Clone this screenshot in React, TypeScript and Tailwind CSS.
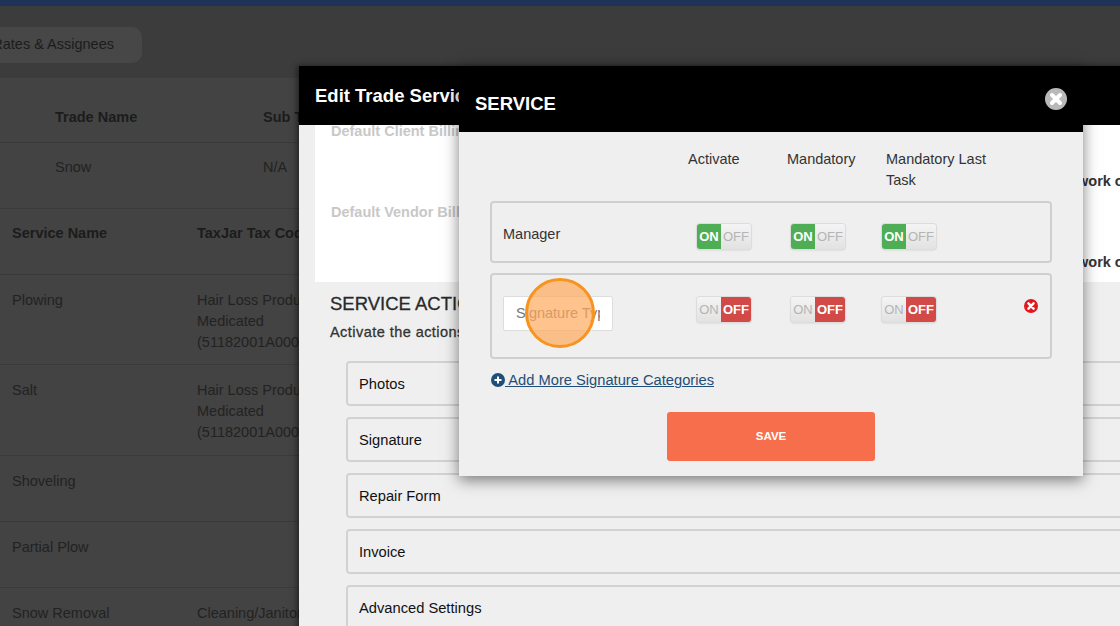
import React from "react";

const services = [
  { name: "Plowing", code: ["Hair Loss Products -", "Medicated", "(51182001A0000)"], h: "h-[90px]" },
  { name: "Salt", code: ["Hair Loss Products -", "Medicated", "(51182001A0000)"], h: "h-[91px]" },
  { name: "Shoveling", code: [], h: "h-[66px]" },
  { name: "Partial Plow", code: [], h: "h-[66px]" },
  { name: "Snow Removal", code: ["Cleaning/Janitorial"], h: "h-[66px]" },
];

const actions = ["Photos", "Signature", "Repair Form", "Invoice", "Advanced Settings"];

const Toggle = ({ on }: { on: boolean }) => (
  <div className="flex h-[25px] w-[54px] overflow-hidden rounded-[3px] text-[13px] leading-[25px] shadow-[0_0_0_1px_#dcdcdc,0_1px_2px_#c4c4c4]">
    <span
      className={
        on
          ? "w-[24px] shrink-0 bg-[#4fae55] text-center font-bold text-white"
          : "w-[24px] shrink-0 bg-gradient-to-b from-[#f4f4f4] to-[#e2e2e2] text-center text-[#b4b4b4]"
      }
    >
      ON
    </span>
    <span
      className={
        on
          ? "flex-1 bg-gradient-to-b from-[#f4f4f4] to-[#e2e2e2] text-center text-[#b4b4b4]"
          : "flex-1 bg-[#d24a47] text-center font-bold text-white"
      }
    >
      OFF
    </span>
  </div>
);

const CloseIcon = ({ size, bg, x }: { size: number; bg: string; x: string }) => (
  <svg width={size} height={size} viewBox="0 0 22 22">
    <circle cx="11" cy="11" r="11" fill={bg} />
    <path d="M7 7 L15 15 M15 7 L7 15" stroke={x} strokeWidth="4" strokeLinecap="round" />
  </svg>
);

export default function App() {
  return (
    <div className="relative h-[626px] w-[1120px] overflow-hidden bg-[#3c3c3c] font-['Liberation_Sans',sans-serif] text-[14.5px] text-[#222]">
      {/* dimmed page behind the modals */}
      <div className="h-[6px] bg-[#1f3358]" />
      <div className="h-[72px] pt-[21px]">
        <div className="flex h-[36px] w-[142px] items-center justify-end whitespace-nowrap rounded-r-[10px] bg-[#474747] pr-[28px] text-[#1c1c1c]">
          Rates &amp; Assignees
        </div>
      </div>
      <div className="bg-[#434343]">
        <div className="flex h-[65px] border-b border-[#3a3a3a] pl-[55px] pt-[30px] font-bold leading-[18px] text-[#1c1c1c]">
          <span className="w-[208px]">Trade Name</span>
          <span>Sub Trade</span>
        </div>
        <div className="flex h-[66px] border-b border-[#3a3a3a] pl-[55px] pt-[15px] leading-[18px]">
          <span className="w-[208px]">Snow</span>
          <span>N/A</span>
        </div>
        <div className="flex h-[66px] border-b border-[#3a3a3a] pl-[12px] pt-[15px] font-bold leading-[18px] text-[#1c1c1c]">
          <span className="w-[185px]">Service Name</span>
          <span>TaxJar Tax Code</span>
        </div>
        {services.map((s) => (
          <div key={s.name} className={`flex ${s.h} border-b border-[#3a3a3a] pl-[12px] pt-[15px] leading-[21px]`}>
            <span className="w-[185px]">{s.name}</span>
            <div>
              {s.code.map((line) => (
                <div key={line}>{line}</div>
              ))}
            </div>
          </div>
        ))}
      </div>

      {/* edit trade service panel */}
      <div className="absolute left-[299px] top-[66px] h-[600px] w-[900px] bg-[#efefef] shadow-[-2px_0_6px_rgba(0,0,0,0.5)]">
        <div className="flex h-[59px] items-center bg-black pl-[16px] text-[18.5px] font-bold text-white">
          Edit Trade Service
        </div>
        <div className="ml-[16px] h-[157px] bg-white pl-[16px] font-bold leading-[12px] text-[#c8c8c8]">
          <div className="h-[81px]">Default Client Billing</div>
          <div>Default Vendor Billing</div>
        </div>
        <div className="pl-[31px] pt-[10px]">
          <div className="text-[18.5px] leading-[24px] text-[#2a2a2a] [-webkit-text-stroke:0.3px_#2a2a2a]">SERVICE ACTIONS</div>
          <div className="mt-[7px] leading-[18px] tracking-[0.45px] text-[#333] [-webkit-text-stroke:0.3px_#333]">Activate the actions</div>
          <div className="ml-[16px] mt-[20px] flex flex-col gap-[11px]">
            {actions.map((a) => (
              <div
                key={a}
                className="flex h-[45px] items-center rounded-[4px] border-2 border-[#d2d2d2] pl-[11px] pt-[2px] text-[14.7px] text-[#111]"
              >
                {a}
              </div>
            ))}
          </div>
        </div>
        <div className="absolute left-[778px] top-[106px] font-bold leading-[18px] text-[#333]">work o</div>
        <div className="absolute left-[778px] top-[187px] font-bold leading-[18px] text-[#333]">work o</div>
      </div>

      {/* service modal */}
      <div className="absolute left-[459px] top-[66px] h-[410px] w-[624px] bg-[#efefef] shadow-[0_4px_14px_rgba(0,0,0,0.5)]">
        <div className="relative flex h-[66px] items-center bg-black pl-[16px] pt-[9px] text-[18.5px] font-bold text-white">
          SERVICE
          <div className="absolute left-[586px] top-[22px] flex">
            <CloseIcon size={22} bg="#b9b9b9" x="#ffffff" />
          </div>
        </div>
        <div className="flex h-[69px] pl-[229px] pt-[17px] leading-[21px] text-[#333]">
          <span className="w-[99px]">Activate</span>
          <span className="w-[99px]">Mandatory</span>
          <span className="w-[110px]">Mandatory Last Task</span>
        </div>
        <div className="mx-[31px] flex h-[62px] rounded-[4px] border-2 border-[#cfcfcf] pl-[11px] pt-[21px] text-[#333]">
          <span className="w-[194px] pt-[1px] leading-[18px]">Manager</span>
          <div className="flex">
            <div className="w-[94px]"><Toggle on /></div>
            <div className="w-[91px]"><Toggle on /></div>
            <Toggle on />
          </div>
        </div>
        <div className="relative mx-[31px] mt-[10px] flex h-[86px] rounded-[4px] border-2 border-[#cfcfcf] pl-[11px] pt-[21px]">
          <input
            placeholder="Signature Type"
            className="h-[35px] w-[110px] rounded-[2px] border border-[#ddd] bg-white px-[12px] pb-[2px] text-[14.5px] placeholder:text-[#777]"
          />
          <div className="ml-[84px] flex pt-[1px]">
            <div className="w-[94px]"><Toggle on={false} /></div>
            <div className="w-[91px]"><Toggle on={false} /></div>
            <Toggle on={false} />
          </div>
          <div className="absolute left-[532px] top-[24px] flex">
            <CloseIcon size={14} bg="#e3161b" x="#ffffff" />
          </div>
          <div className="absolute left-[33px] top-[3px] h-[70px] w-[70px] rounded-full border-[3px] border-[#f7931e] bg-[#ffa95c]/70" />
        </div>
        <div className="mx-[32px] mt-[10px] flex items-center text-[14.7px] text-[#1f4e79] underline">
          <svg width="14" height="14" viewBox="0 0 14 14" className="shrink-0">
            <circle cx="7" cy="7" r="7" fill="#1f4e79" />
            <path d="M7 3.5 V10.5 M3.5 7 H10.5" stroke="#fff" strokeWidth="2" />
          </svg>
          <span className="whitespace-pre"> Add More Signature Categories</span>
        </div>
        <div className="mt-[21px] flex justify-center">
          <div className="flex h-[49px] w-[208px] items-center justify-center rounded-[3px] bg-[#f76e4d] text-[11.5px] font-bold text-white">
            SAVE
          </div>
        </div>
      </div>
    </div>
  );
}
